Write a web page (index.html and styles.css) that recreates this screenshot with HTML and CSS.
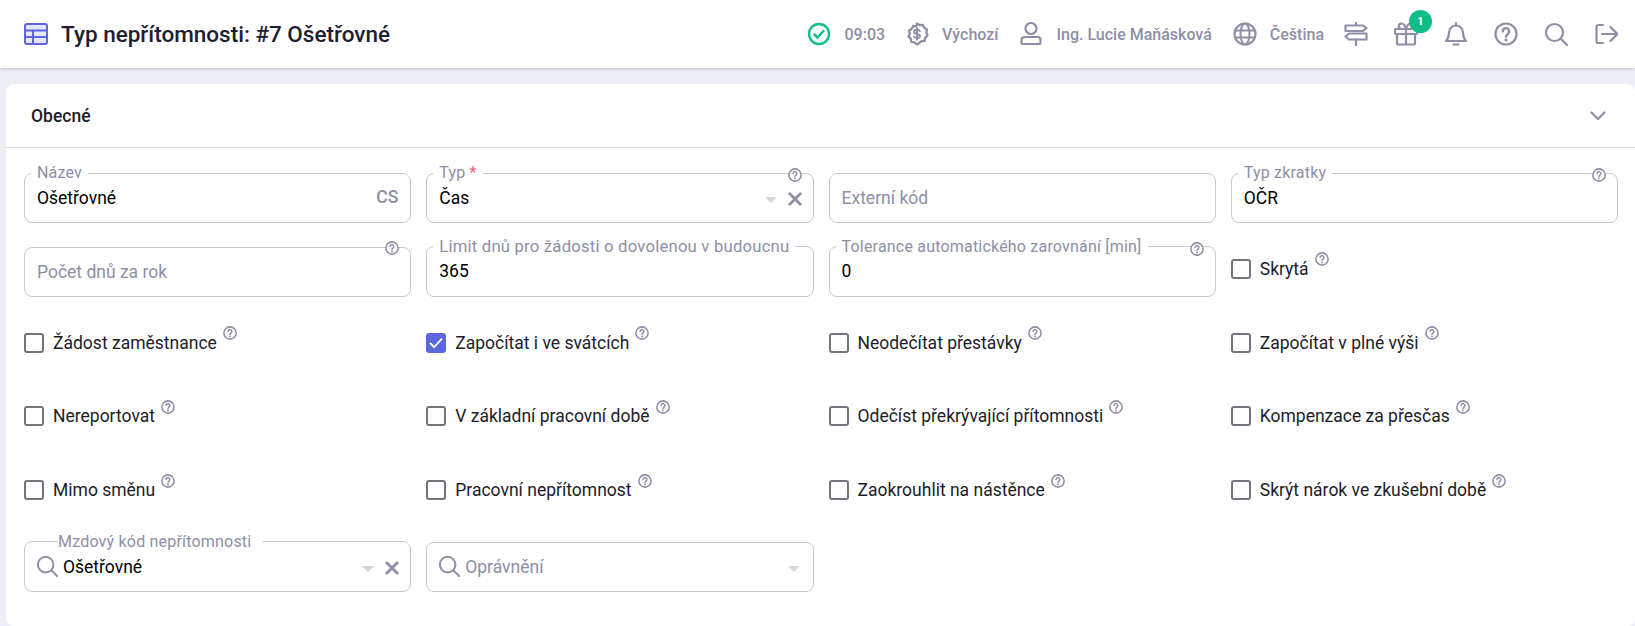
FILE: index.html
```html
<!DOCTYPE html>
<html lang="cs">
<head>
<meta charset="utf-8">
<title>Typ nepřítomnosti: #7 Ošetřovné</title>
<link rel="stylesheet" href="styles.css">
</head>
<body>
<svg class="defs" width="0" height="0">
  <defs>
    <symbol id="help" viewBox="0 0 24 24"><circle cx="12" cy="12" r="10.5" fill="#fff" stroke="currentColor" stroke-width="2.6"/><path d="M8.8 9.4a3.2 3.2 0 1 1 5 2.6c-1.1.8-1.8 1.3-1.8 2.6" fill="none" stroke="currentColor" stroke-width="2.6" stroke-linecap="round"/><circle cx="12" cy="18" r="1.6" fill="currentColor"/></symbol>
    <symbol id="help-lg" viewBox="0 0 24 24"><circle cx="12" cy="12" r="10.5" fill="none" stroke="currentColor" stroke-width="2.2"/><path d="M8.8 9.4a3.2 3.2 0 1 1 5 2.6c-1.100.8-1.800 1.300-1.800 2.800" fill="none" stroke="currentColor" stroke-width="2.400" stroke-linecap="round"/><circle cx="12" cy="18" r="1.500" fill="currentColor"/></symbol>
    <symbol id="search" viewBox="0 0 24 24"><circle cx="10.500" cy="10.500" r="8.500" fill="none" stroke="currentColor" stroke-width="2.200"/><path d="M16.800 16.800 23 23" fill="none" stroke="currentColor" stroke-width="2.200" stroke-linecap="round"/></symbol>
  </defs>
</svg>
<header class="topbar">
  <div class="title-group">
    <svg class="title-icon" viewBox="0 0 24 22" aria-hidden="true"><rect x="1" y="1" width="22" height="20" rx="2" fill="#e4e6fa" stroke="#5c67de" stroke-width="2"/><path d="M1 7.500h22M1 14h22M9 7.500V21" fill="none" stroke="#5c67de" stroke-width="2"/></svg>
    <h1 class="title">Typ nepřítomnosti: #7 Ošetřovné</h1>
  </div>
  <nav class="top-actions">
    <div class="action action-tight">
      <svg class="icon" viewBox="0 0 24 24"><circle cx="12" cy="12" r="10" fill="none" stroke="#10bd87" stroke-width="2.300"/><path d="M7.500 12.500l3 3 6-6.500" fill="none" stroke="#10bd87" stroke-width="2.500" stroke-linecap="round" stroke-linejoin="round"/></svg>
      <span>09:03</span>
    </div>
    <div class="action">
      <svg class="icon" viewBox="0 0 24 24"><path d="M12 1.500l2.700 1.700 3.200-.3 1.300 2.900 2.800 1.600-.7 3.100 1.200 2.900-2.300 2.200-.5 3.200-3.200.4L12 22.500l-2.500-2.200-3.200-.4-.5-3.200-2.300-2.200 1.200-2.900-.7-3.100 2.800-1.600 1.300-2.900 3.200.3z" fill="none" stroke="currentColor" stroke-width="2.300" stroke-linejoin="round"/><path d="M15 9.300c-.5-1-1.600-1.500-3-1.500-1.700 0-3 .8-3 2.100 0 2.800 6 1.300 6 4.100 0 1.300-1.300 2.100-3 2.100-1.400 0-2.500-.5-3-1.500M12 6.300v11.400" fill="none" stroke="currentColor" stroke-width="1.900" stroke-linecap="round"/></svg>
      <span>Výchozí</span>
    </div>
    <div class="action">
      <svg class="icon" viewBox="0 0 24 24"><circle cx="12" cy="6.500" r="5.500" fill="none" stroke="currentColor" stroke-width="2.200"/><path d="M5.500 15h13a3 3 0 0 1 3 3v2.500a1.500 1.500 0 0 1-1.500 1.500H4a1.500 1.500 0 0 1-1.500-1.500V18a3 3 0 0 1 3-3z" fill="none" stroke="currentColor" stroke-width="2.200"/></svg>
      <span>Ing. Lucie Maňásková</span>
    </div>
    <div class="action action-tight">
      <svg class="icon" viewBox="0 0 24 24"><circle cx="12" cy="12" r="10.500" fill="none" stroke="currentColor" stroke-width="2.200"/><ellipse cx="12" cy="12" rx="4.500" ry="10.500" fill="none" stroke="currentColor" stroke-width="2"/><path d="M2 8.500h20M2 15.500h20" fill="none" stroke="currentColor" stroke-width="2"/></svg>
      <span>Čeština</span>
    </div>
    <div class="icon-row">
      <svg class="icon" viewBox="0 0 24 24"><path d="M12 .5v3M12 17v7M1.500 3.500H19l3.500 2.700L19 9H1.500zM22.500 11.500H5l-3.500 3L5 17.500h17.500z" fill="none" stroke="currentColor" stroke-width="2.200" stroke-linejoin="round" stroke-linecap="round"/></svg>
      <div class="gift">
        <svg class="icon" viewBox="0 0 24 24"><rect x="1" y="7" width="22" height="5" rx="1" fill="none" stroke="currentColor" stroke-width="2.200"/><path d="M3 12v9a1.500 1.500 0 0 0 1.500 1.500h15A1.500 1.500 0 0 0 21 21v-9M12 7v15.500M12 7S10.500 1.500 7.500 1.500a2.700 2.700 0 0 0 0 5.500M12 7s1.500-5.500 4.500-5.500a2.700 2.700 0 0 1 0 5.500" fill="none" stroke="currentColor" stroke-width="2.200"/></svg>
        <span class="badge">1</span>
      </div>
      <svg class="icon" viewBox="0 0 24 24"><path d="M12 3.500a7 7 0 0 0-7 7c0 5-1.200 6.500-3 8.500h20c-1.800-2-3-3.500-3-8.500a7 7 0 0 0-7-7zM12 1v2.500M9.500 22.500h5" fill="none" stroke="currentColor" stroke-width="2.200" stroke-linecap="round" stroke-linejoin="round"/></svg>
      <svg class="icon"><use href="#help-lg"/></svg>
      <svg class="icon"><use href="#search"/></svg>
      <svg class="icon" viewBox="0 0 24 24"><path d="M9 3H4.500a2 2 0 0 0-2 2v14a2 2 0 0 0 2 2H9M8 12h15M16.500 5l7 7-7 7" fill="none" stroke="currentColor" stroke-width="2.200" stroke-linecap="round" stroke-linejoin="round"/></svg>
    </div>
  </nav>
</header>

<main class="card">
  <div class="card-head">
    <h2 class="card-title">Obecné</h2>
    <svg class="chevron" viewBox="0 0 16 10"><path d="M1.500 1.500 8 8l6.500-6.500" fill="none" stroke="currentColor" stroke-width="2.200" stroke-linecap="round" stroke-linejoin="round"/></svg>
  </div>
  <form class="form-grid">
    <fieldset class="field">
      <legend>Název</legend>
      <div class="value">Ošetřovné</div>
      <span class="suffix">CS</span>
    </fieldset>
    <fieldset class="field">
      <legend>Typ <b class="req">*</b></legend>
      <div class="value">Čas</div>
      <svg class="help help-corner"><use href="#help"/></svg>
      <span class="caret caret-clear"></span>
      <svg class="clear" viewBox="0 0 12 12"><path d="M1.500 1.500l9 9M10.500 1.500l-9 9" stroke="currentColor" stroke-width="2.400" stroke-linecap="round"/></svg>
    </fieldset>
    <fieldset class="field field-plain">
      <div class="placeholder">Externí kód</div>
    </fieldset>
    <fieldset class="field">
      <legend>Typ zkratky</legend>
      <div class="value">OČR</div>
      <svg class="help help-corner"><use href="#help"/></svg>
    </fieldset>

    <fieldset class="field field-plain">
      <div class="placeholder">Počet dnů za rok</div>
      <svg class="help help-corner"><use href="#help"/></svg>
    </fieldset>
    <fieldset class="field">
      <legend class="legend-wide">Limit dnů pro žádosti o dovolenou v budoucnu</legend>
      <div class="value">365</div>
    </fieldset>
    <fieldset class="field">
      <legend>Tolerance automatického zarovnání [min]</legend>
      <div class="value">0</div>
      <svg class="help help-corner"><use href="#help"/></svg>
    </fieldset>
    <div class="check"><span class="box"></span><span>Skrytá</span><svg class="help"><use href="#help"/></svg></div>

    <div class="check"><span class="box"></span><span>Žádost zaměstnance</span><svg class="help"><use href="#help"/></svg></div>
    <div class="check"><span class="box box-on"><svg viewBox="0 0 20 20"><path d="M4.500 10.500l3.700 3.700 7.300-8" fill="none" stroke="#fff" stroke-width="1.800" stroke-linecap="round" stroke-linejoin="round"/></svg></span><span>Započítat i ve svátcích</span><svg class="help"><use href="#help"/></svg></div>
    <div class="check"><span class="box"></span><span>Neodečítat přestávky</span><svg class="help"><use href="#help"/></svg></div>
    <div class="check"><span class="box"></span><span>Započítat v plné výši</span><svg class="help"><use href="#help"/></svg></div>

    <div class="check"><span class="box"></span><span>Nereportovat</span><svg class="help"><use href="#help"/></svg></div>
    <div class="check"><span class="box"></span><span>V základní pracovní době</span><svg class="help"><use href="#help"/></svg></div>
    <div class="check"><span class="box"></span><span>Odečíst překrývající přítomnosti</span><svg class="help"><use href="#help"/></svg></div>
    <div class="check"><span class="box"></span><span>Kompenzace za přesčas</span><svg class="help"><use href="#help"/></svg></div>

    <div class="check"><span class="box"></span><span>Mimo směnu</span><svg class="help"><use href="#help"/></svg></div>
    <div class="check"><span class="box"></span><span>Pracovní nepřítomnost</span><svg class="help"><use href="#help"/></svg></div>
    <div class="check"><span class="box"></span><span>Zaokrouhlit na nástěnce</span><svg class="help"><use href="#help"/></svg></div>
    <div class="check"><span class="box"></span><span>Skrýt nárok ve zkušební době</span><svg class="help"><use href="#help"/></svg></div>

    <fieldset class="field field-search">
      <legend class="legend-search">Mzdový kód nepřítomnosti</legend>
      <svg class="search-icon"><use href="#search"/></svg>
      <div class="value">Ošetřovné</div>
      <span class="caret caret-clear"></span>
      <svg class="clear" viewBox="0 0 12 12"><path d="M1.500 1.500l9 9M10.500 1.500l-9 9" stroke="currentColor" stroke-width="2.400" stroke-linecap="round"/></svg>
    </fieldset>
    <fieldset class="field field-plain field-search">
      <svg class="search-icon"><use href="#search"/></svg>
      <div class="placeholder">Oprávnění</div>
      <span class="caret"></span>
    </fieldset>
  </form>
</main>
</body>
</html>
```

FILE: styles.css
```css
* { box-sizing: border-box; }
html, body { margin: 0; height: 100%; }
body {
  background: #eeeff5;
  color: #1c1c28;
  font-family: Roboto, "Liberation Sans", sans-serif;
  font-size: 17.5px;
  overflow: hidden;
}
.defs { position: absolute; }

.topbar {
  display: flex;
  align-items: center;
  justify-content: space-between;
  height: 68px;
  padding: 0 17px 0 24px;
  background: #fff;
  box-shadow: 0 1px 3px rgba(60, 60, 90, .28);
  position: relative;
}
.title-group { display: flex; align-items: center; gap: 13px; }
.title-icon { width: 24px; height: 22px; }
.title { margin: 0; font-size: 22.5px; font-weight: 500; line-height: 1; color: #1c2030; }

.top-actions { display: flex; align-items: center; color: #8e8fa6; font-size: 16px; font-weight: 500; }
.action { display: flex; align-items: center; gap: 13px; margin-right: 21px; }
.action-tight { margin-right: 20px; }
.icon { width: 24px; height: 24px; display: block; color: #8e8fa6; }
.icon-row { display: flex; align-items: center; gap: 26px; }
.gift { position: relative; }
.badge {
  position: absolute;
  top: -12px;
  right: -14px;
  width: 23px;
  height: 23px;
  border-radius: 50%;
  background: #10bd87;
  color: #fff;
  font-size: 11px;
  font-weight: 700;
  display: flex;
  align-items: center;
  justify-content: center;
}

.card {
  margin: 16px 0 0 6px;
  height: 542px;
  background: #fff;
  border-radius: 8px;
}
.card-head {
  display: flex;
  align-items: center;
  justify-content: space-between;
  height: 64px;
  padding: 0 29px 0 25px;
  border-bottom: 1px solid #dcdce2;
}
.card-title { margin: 0; font-size: 17.5px; font-weight: 500; color: #1c1c28; }
.chevron { width: 16px; height: 10px; color: #8e8fa6; }

.form-grid {
  display: grid;
  grid-template-columns: repeat(4, 1fr);
  grid-auto-rows: 58px;
  column-gap: 15px;
  row-gap: 15.8px;
  padding: 17px 17px 0 18px;
  margin: 0;
}

.field {
  position: relative;
  display: flex;
  align-items: center;
  margin: 0;
  min-width: 0;
  padding: 0 12px;
  border: 1px solid #c7c7d1;
  border-radius: 8px;
  height: 58px;
}
.field legend {
  font-size: 16px;
  line-height: 16px;
  color: #8e8fa6;
  padding: 0 6px;
  margin-left: -6px;
  white-space: nowrap;
  letter-spacing: .2px;
}
.field .legend-wide { font-size: 16.7px; }
.field .legend-search {
  margin-left: 21px;
  padding: 0 12px 0 0;
}
.field-plain { height: 50px; margin-top: 8px; }
.value { color: #000; margin-top: -8px; }
.placeholder { color: #8e8fa6; }
.req { color: #f2606b; font-weight: 400; }
.suffix { position: absolute; right: 12px; top: 6px; color: #8e8fa6; font-weight: 500; }

.help { width: 14px; height: 14px; color: #8e8fa6; flex: none; }
.help-corner { position: absolute; top: -13px; right: 11px; }
.field-plain .help-corner { top: -7px; }

.caret {
  position: absolute;
  right: 13px;
  top: 50%;
  margin-top: -1px;
  border-left: 6px solid transparent;
  border-right: 6px solid transparent;
  border-top: 6px solid #d5d5dd;
}
.caret-clear { right: 36px; top: 16px; margin-top: 0; }
.clear { position: absolute; right: 11px; top: 11px; width: 14px; height: 14px; color: #8e8fa6; }

.check { display: flex; align-items: center; color: #1c1c28; padding-top: 2px; }
.check > span:nth-child(2) { margin-left: 9px; }
.check .help { margin: -19px 0 0 6px; }
.box {
  width: 20px;
  height: 20px;
  flex: none;
  border: 2px solid #74747c;
  border-radius: 3px;
  background: #fff;
  display: block;
}
.box-on { background: #5c67de; border-color: #5c67de; }
.box-on svg { display: block; width: 20px; height: 20px; margin: -2px; }

.search-icon { width: 22px; height: 22px; color: #8e8fa6; flex: none; margin-right: 5px; }
.field-search .value { margin-top: -6px; }
.field-search .search-icon { margin-top: -8px; margin-left: -1px; }
.field-plain.field-search .search-icon { margin-top: -2px; }
```
